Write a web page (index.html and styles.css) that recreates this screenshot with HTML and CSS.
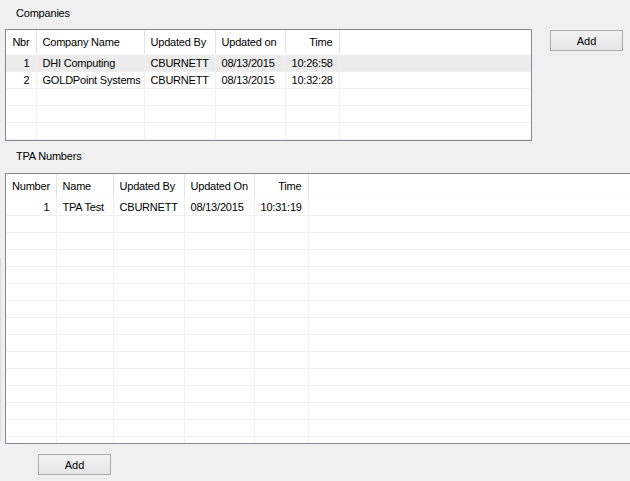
FILE: index.html
```html
<!DOCTYPE html>
<html lang="en">
<head>
    <meta charset="UTF-8">
    <title>Companies</title>
    <link rel="stylesheet" href="styles.css">
</head>
<body>
    <div class="form">
        <div class="group-label">Companies</div>
        <div class="top-row">
            <div class="list list-companies">
                <table>
                    <colgroup>
                        <col style="width:30px"><col style="width:108px"><col style="width:71px"><col style="width:70px"><col style="width:54px"><col>
                    </colgroup>
                    <thead>
                        <tr><th class="num">Nbr</th><th>Company Name</th><th>Updated By</th><th>Updated on</th><th class="num">Time</th><th></th></tr>
                    </thead>
                    <tbody>
                        <tr class="selected"><td class="num">1</td><td>DHI Computing</td><td>CBURNETT</td><td>08/13/2015</td><td class="num">10:26:58</td><td></td></tr>
                        <tr><td class="num">2</td><td>GOLDPoint Systems</td><td>CBURNETT</td><td>08/13/2015</td><td class="num">10:32:28</td><td></td></tr>
                        <tr><td></td><td></td><td></td><td></td><td></td><td></td></tr>
                        <tr><td></td><td></td><td></td><td></td><td></td><td></td></tr>
                        <tr><td></td><td></td><td></td><td></td><td></td><td></td></tr>
                    </tbody>
                </table>
            </div>
            <button class="btn btn-top">Add</button>
        </div>

        <div class="group-label tpa-label">TPA Numbers</div>
        <div class="tpa-wrap">
            <div class="list list-tpa">
                <table>
                    <colgroup>
                        <col style="width:50px"><col style="width:57px"><col style="width:71px"><col style="width:70px"><col style="width:54px"><col>
                    </colgroup>
                    <thead>
                        <tr><th class="num">Number</th><th>Name</th><th>Updated By</th><th>Updated On</th><th class="num">Time</th><th></th></tr>
                    </thead>
                    <tbody id="tpa-body">
                        <tr><td class="num">1</td><td>TPA Test</td><td>CBURNETT</td><td>08/13/2015</td><td class="num">10:31:19</td><td></td></tr>
                    </tbody>
                </table>
            </div>
        </div>
        <button class="btn btn-bottom">Add</button>
    </div>

    <script>
        // pad the TPA list with empty grid rows
        const tpaBody = document.getElementById('tpa-body');
        for (let i = 0; i < 14; i++) {
            const tr = document.createElement('tr');
            for (let c = 0; c < 6; c++) tr.appendChild(document.createElement('td'));
            tpaBody.appendChild(tr);
        }
    </script>
</body>
</html>
```

FILE: styles.css
```css
* {
    margin: 0;
    padding: 0;
    box-sizing: border-box;
}

html, body {
    background: #f0f0f0;
    overflow: hidden;
}

body {
    font-family: 'Liberation Sans', Arial, sans-serif;
    font-size: 11px;
    letter-spacing: -0.2px;
    color: #000;
    width: 630px;
    height: 481px;
}

.group-label {
    padding: 7px 0 0 16px;
    height: 29px;
    line-height: 13px;
}

.top-row {
    display: flex;
    align-items: flex-start;
    padding-left: 5px;
}

.list {
    border: 1px solid #828790;
    background: #fff;
    overflow: hidden;
}

.list-companies {
    width: 527px;
    height: 112px;
}

/* faint splitter line down the left edge */
.tpa-wrap {
    padding-left: 4px;
    border-left: 1px solid #dadada;
    border-image: linear-gradient(transparent 85px, #dadada 85px, #dadada 267px, transparent 267px) 1;
}

.list-tpa {
    width: 640px;
    height: 271px;
}

.tpa-label {
    padding-top: 9px;
    height: 32px;
}

table {
    border-collapse: collapse;
    table-layout: fixed;
    width: 100%;
}

th {
    height: 24px;
    font-weight: normal;
    text-align: left;
    padding: 1px 6px 0;
    background: #fff;
    border-right: 1px solid #e5e5e5;
    border-bottom: 1px solid #fafafa;
    white-space: nowrap;
}

th:last-child {
    border-right: none;
}

td {
    height: 17px;
    padding: 1px 6px 0;
    border-right: 1px solid #f0f0f0;
    border-bottom: 1px solid #f0f0f0;
    white-space: nowrap;
    overflow: hidden;
}

td:last-child {
    border-right: none;
}

.num {
    text-align: right;
}

tr.selected td {
    background: #ececec;
}

.btn {
    width: 73px;
    height: 21px;
    font-family: 'Liberation Sans', Arial, sans-serif;
    font-size: 11px;
    color: #000;
    border: 1px solid #adadad;
    background: linear-gradient(#f2f2f2, #e6e6e6);
}

.btn-top {
    margin: 1px 0 0 18px;
}

.btn-bottom {
    margin: 10px 0 0 38px;
}
```
